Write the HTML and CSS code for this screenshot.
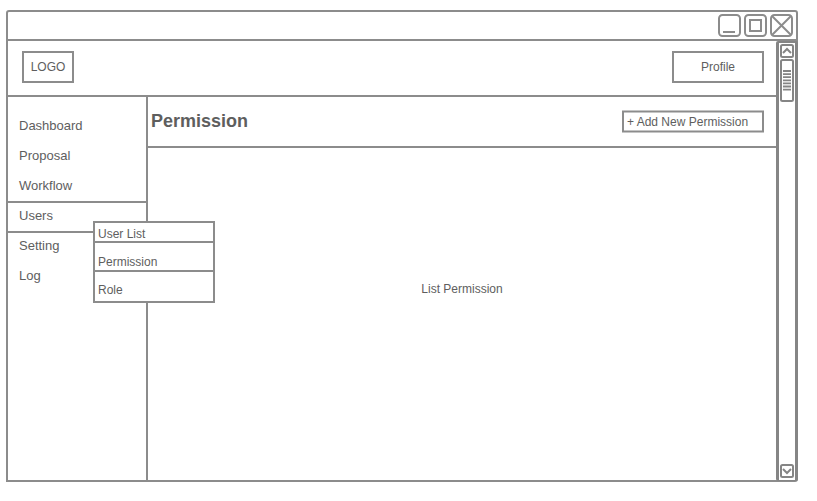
FILE: index.html
```html
<!DOCTYPE html>
<html lang="en">
<head>
<meta charset="utf-8">
<title>Permission</title>
<link rel="stylesheet" href="styles.css">
</head>
<body>
<div class="window">
  <div class="titlebar">
    <svg class="controls" width="75" height="23" viewBox="0 0 75 23">
      <rect x="1" y="1" width="21" height="21" rx="3.5"/>
      <path d="M5 18H17"/>
      <rect x="27" y="1" width="21" height="21" rx="3.5"/>
      <rect x="32" y="6" width="11" height="11"/>
      <rect x="53" y="1" width="21" height="21" rx="3.5"/>
      <path d="M54 2L73 21M73 2L54 21"/>
    </svg>
  </div>
  <div class="body">
    <div class="app">
      <header class="header">
        <div class="logo">LOGO</div>
        <div class="profile">Profile</div>
      </header>
      <div class="columns">
        <nav class="sidebar">
          <div class="item">Dashboard</div>
          <div class="item">Proposal</div>
          <div class="item">Workflow</div>
          <div class="item active">Users
            <div class="menu">
              <div class="entry list">User List</div>
              <div class="entry permission">Permission</div>
              <div class="entry role">Role</div>
            </div>
          </div>
          <div class="item">Setting</div>
          <div class="item">Log</div>
        </nav>
        <main class="main">
          <div class="toolbar">
            <h1>Permission</h1>
            <div class="add">+ Add New Permission</div>
          </div>
          <div class="content">List Permission</div>
        </main>
      </div>
    </div>
    <div class="scrollbar">
      <svg class="arrow" width="14" height="14" viewBox="0 0 14 14"><rect x="1" y="1" width="12" height="12" rx="1.5"/><path d="M3 9L7 5L11 9"/></svg>
      <svg class="thumb" width="14" height="43" viewBox="0 0 14 43"><rect x="1" y="1" width="12" height="41" rx="1.5"/><path d="M3 12H11M3 15.1H11M3 18.2H11M3 21.3H11M3 24.4H11M3 27.5H11M3 30.7H11"/></svg>
      <svg class="arrow down" width="14" height="14" viewBox="0 0 14 14"><rect x="1" y="1" width="12" height="12" rx="1.5"/><path d="M3 5L7 9L11 5"/></svg>
    </div>
  </div>
</div>
</body>
</html>
```
FILE: styles.css
```css
* { box-sizing: border-box; }
body {
  margin: 0;
  padding: 10px 0 0 6px;
  background: #fff;
  color: #5e5e5e;
  font: 12px/14px "Liberation Sans", Arial, sans-serif;
}
svg { display: block; fill: none; stroke: #8c8c8c; stroke-width: 2; }
.window {
  display: flex;
  flex-direction: column;
  width: 792px;
  height: 472px;
  border: 2px solid #8c8c8c;
  border-radius: 3px 3px 3px 0;
}
.titlebar {
  display: flex;
  justify-content: flex-end;
  height: 29px;
  padding: 2px 3px 0 0;
  border-bottom: 2px solid #8c8c8c;
}
.body { display: flex; flex: 1; min-height: 0; margin-right: -2px; }
.app { display: flex; flex-direction: column; flex: 1; min-width: 0; }
.header {
  display: flex;
  justify-content: space-between;
  height: 56px;
  padding: 10px 12px 0 14px;
  border-bottom: 2px solid #8c8c8c;
}
.logo, .profile {
  height: 32px;
  border: 2px solid #8c8c8c;
  line-height: 28px;
  text-align: center;
}
.logo { width: 52px; }
.profile { width: 92px; }
.columns { display: flex; flex: 1; min-height: 0; }
.sidebar {
  width: 140px;
  padding-top: 14px;
  border-right: 2px solid #8c8c8c;
  font-size: 13px;
}
.item { height: 30px; padding-left: 11px; line-height: 30px; }
.active {
  position: relative;
  height: 32px;
  margin-bottom: -2px;
  border: solid #8c8c8c;
  border-width: 2px 0;
  line-height: 26px;
}
.menu {
  position: absolute;
  z-index: 1;
  left: 85px;
  top: 18px;
  width: 122px;
  height: 82px;
  border: 2px solid #8c8c8c;
  background: #fff;
  font-size: 12px;
  line-height: 14px;
}
.entry { padding-left: 3px; border-bottom: 2px solid #8c8c8c; }
.list { height: 20px; padding-top: 4px; }
.permission { height: 29px; padding-top: 12px; }
.role { padding-top: 11px; border: 0; }
.main { display: flex; flex-direction: column; flex: 1; }
.toolbar {
  display: flex;
  justify-content: space-between;
  height: 51px;
  padding: 13px 12px 0 3px;
  border-bottom: 2px solid #8c8c8c;
}
h1 { margin: 0; font-size: 18px; line-height: 22px; }
.add {
  width: 142px;
  height: 23px;
  padding-left: 5px;
  background:
    linear-gradient(#8c8c8c, #8c8c8c) 0 1px / 2px 21px no-repeat,
    linear-gradient(#8c8c8c, #8c8c8c) 100% 1px / 2px 21px no-repeat,
    linear-gradient(#c5c5c5 1px, #8c8c8c 1px 2px, #c5c5c5 2px 3px, #fff 3px 20px, #c5c5c5 20px 21px, #8c8c8c 21px 22px, #c5c5c5 22px);
  line-height: 24px;
}
.content { padding: 134px 0 0; text-align: center; }
.scrollbar {
  display: flex;
  flex-direction: column;
  width: 22px;
  margin-bottom: -1px;
  padding: 1px 0 2px 1px;
  border: solid #858585;
  border-width: 2px 3px 1px;
  border-radius: 2px;
}
.scrollbar svg { stroke: #858585; }
.thumb { margin-top: 1px; }
.scrollbar .thumb path { stroke-width: 1.8; }
.down { margin-top: auto; }
```
